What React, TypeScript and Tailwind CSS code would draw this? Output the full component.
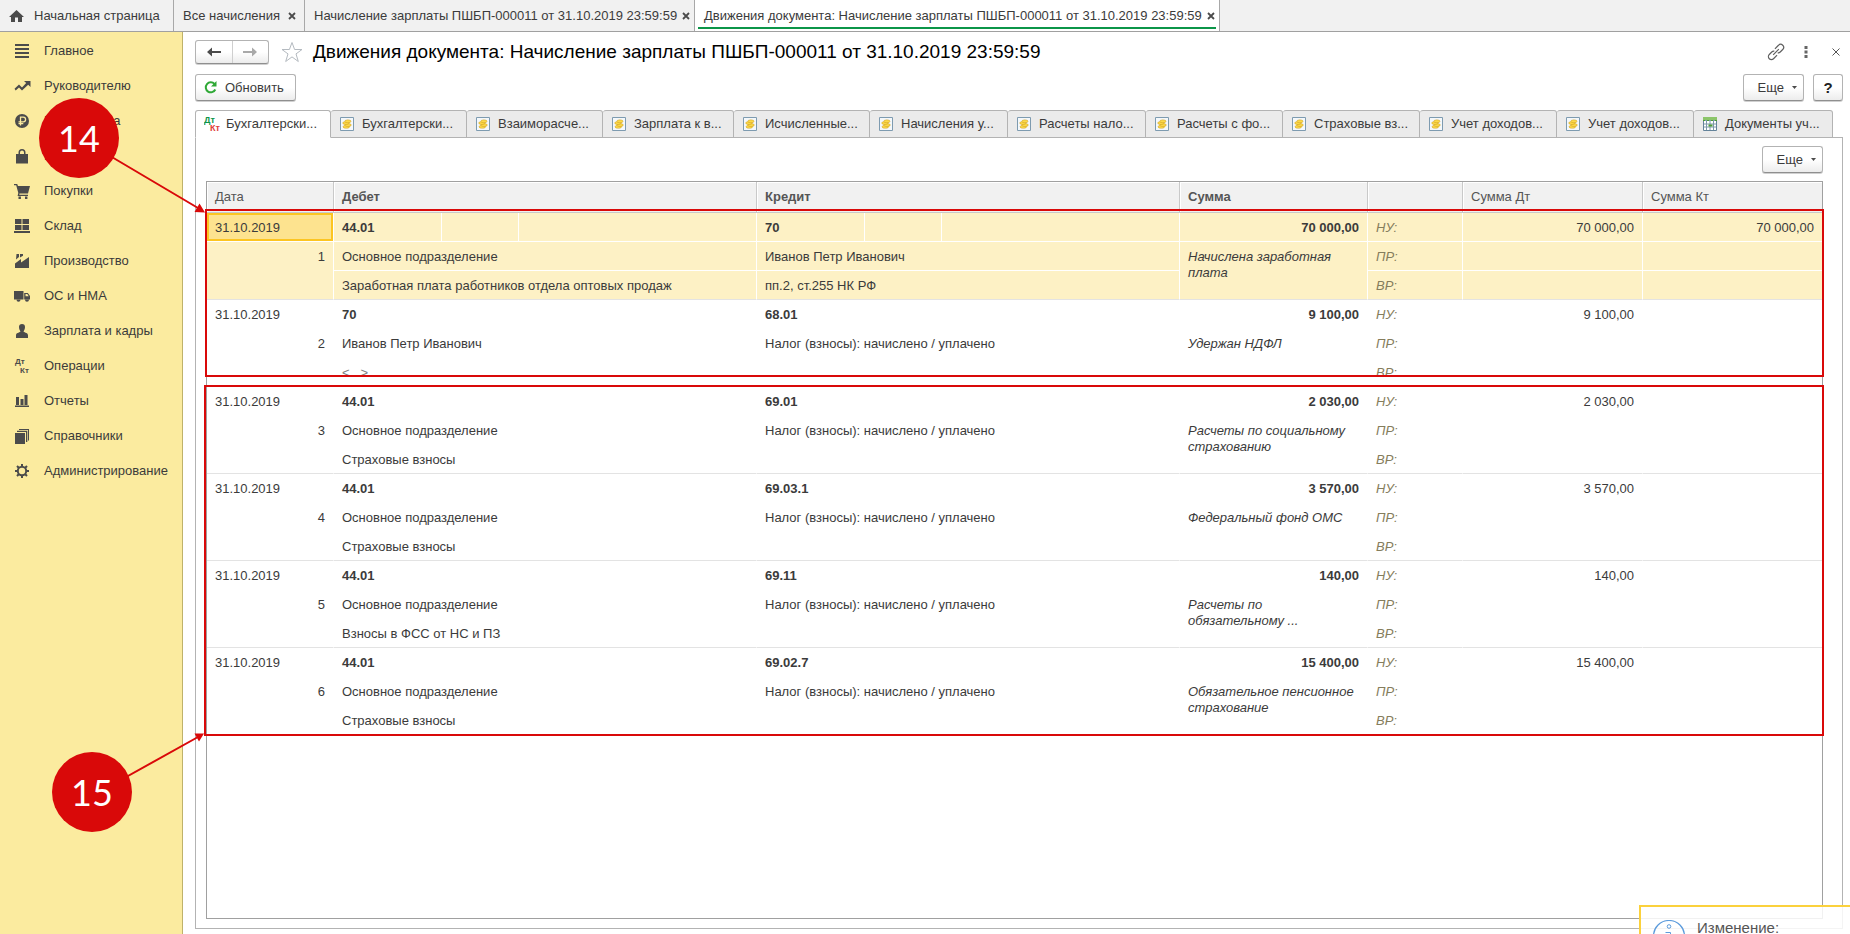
import React from "react";

const menu = [
  "Главное", "Руководителю", "Банк и касса", "Продажи", "Покупки", "Склад", "Производство",
  "ОС и НМА", "Зарплата и кадры", "Операции", "Отчеты", "Справочники", "Администрирование",
];

const menuIcons: React.ReactNode[] = [
  <path d="M0 0h14v2H0zM0 4h14v2H0zM0 8h14v2H0zM0 12h14v2H0z" />,
  <path d="M-.5 9.800l4.500-4.300 3 3L11.200 4 9 2h6.500v6l-2.300-2.200L7 11.500l-3-3-3.300 3z" />,
  <g>
    <circle cx="7" cy="7" r="7" />
    <path d="M5.500 11.500V3.200h2.800a2.300 2.300 0 0 1 0 4.600H3.500M3.500 9.600h4.800" fill="none" stroke="#fbeb9f" strokeWidth="1.300" />
  </g>,
  <path d="M1 5h2.500V3.500a3.500 3.500 0 0 1 7 0V5H13v9.500H1zM5 5h4V3.500a2 2 0 0 0-4 0z" fillRule="evenodd" />,
  <path d="M-1 0h3.200l.8 2h12l-2 7.500H4.500l-.3 1.200H13v1.200H2.600L3.300 9 1.200 1.300H-1zM3.500 12.500h2.400V15H3.500zM10 12.500h2.400V15H10z" />,
  <path d="M0 0h6.500v5H0zM7.500 0H14v5H7.500zM0 6h6.500v5H0zM7.500 6H14v5H7.500zM-1 12h16v2H-1z" />,
  <path d="M0 14V9.500L6 5v3.500L14 3v11zM1.500 0h2.500v3L1 5.500zM5 0h3v1.800L5 3.500z" />,
  <path d="M-1 2h9.500v8.500H-1zM9.200 4h3.600L15 7v3.500H9.200zM10.500 5v2.200h3.200L12.300 5zM1.500 10.700a2 2 0 0 0 4 0zM10 10.700a2 2 0 0 0 4 0z" fillRule="evenodd" />,
  <path d="M7 0a3 3 0 0 1 3 3c0 2-1 4-1.500 4.500C10 9 13 8.500 13 11.500V14H1v-2.500C1 8.500 4 9 5.500 7.500 5 7 4 5 4 3a3 3 0 0 1 3-3z" />,
  <g fontFamily="Liberation Sans, sans-serif" fontWeight="700" fontSize="8">
    <text x="0" y="5">Дт</text>
    <text x="5" y="14">Кт</text>
  </g>,
  <path d="M1 3h3v8H1zM5.500 5h3v6h-3zM9.500 1h3v10h-3zM0 11.500h14V13H0z" />,
  <path d="M0 4h10v11H0zM2 1.800h10.300V13H11V3H2zM4 0h10v11.500h-1V1H4z" />,
  <g fill="none" stroke="#4b4b4b">
    <circle cx="7" cy="7" r="4.200" strokeWidth="2" />
    <path d="M7 0v3M7 11v3M0 7h3M11 7h3M2 2l2 2M10 10l2 2M12 2l-2 2M4 10l-2 2" strokeWidth="2" />
  </g>,
];

const docTabs = [
  ["Бухгалтерски...", "w-[136px]"], ["Бухгалтерски...", "w-[136px]"], ["Взаиморасче...", "w-[136px]"],
  ["Зарплата к в...", "w-[131px]"], ["Исчисленные...", "w-[136px]"], ["Начисления у...", "w-[138px]"],
  ["Расчеты нало...", "w-[138px]"], ["Расчеты с фо...", "w-[137px]"], ["Страховые вз...", "w-[137px]"],
  ["Учет доходов...", "w-[137px]"], ["Учет доходов...", "w-[137px]"], ["Документы уч...", "w-[139px]"],
];

type Entry = { dt: string; kt: string; dt2: string; kt2: string; dt3: string; kt3: string; sum: string; note: string; nuKt: string };

const tax = "Налог (взносы): начислено / уплачено";
const dep = "Основное подразделение";
const entries: Entry[] = [
  { dt: "44.01", kt: "70", dt2: dep, kt2: "Иванов Петр Иванович", dt3: "Заработная плата работников отдела оптовых продаж", kt3: "пп.2, ст.255 НК РФ", sum: "70 000,00", note: "Начислена заработная плата", nuKt: "70 000,00" },
  { dt: "70", kt: "68.01", dt2: "Иванов Петр Иванович", kt2: tax, dt3: "<...>", kt3: "", sum: "9 100,00", note: "Удержан НДФЛ", nuKt: "" },
  { dt: "44.01", kt: "69.01", dt2: dep, kt2: tax, dt3: "Страховые взносы", kt3: "", sum: "2 030,00", note: "Расчеты по социальному страхованию", nuKt: "" },
  { dt: "44.01", kt: "69.03.1", dt2: dep, kt2: tax, dt3: "Страховые взносы", kt3: "", sum: "3 570,00", note: "Федеральный фонд ОМС", nuKt: "" },
  { dt: "44.01", kt: "69.11", dt2: dep, kt2: tax, dt3: "Взносы в ФСС от НС и ПЗ", kt3: "", sum: "140,00", note: "Расчеты по обязательному ...", nuKt: "" },
  { dt: "44.01", kt: "69.02.7", dt2: dep, kt2: tax, dt3: "Страховые взносы", kt3: "", sum: "15 400,00", note: "Обязательное пенсионное страхование", nuKt: "" },
];

const buttonLook = "rounded-[3px] border border-[#b3b3b3] border-b-[#8f8f8f] bg-gradient-to-b from-white from-50% to-[#ececec] shadow-[0_1px_0_#d0d0d0]";

function Close() {
  return (
    <svg className="size-2" viewBox="0 0 8 8" aria-hidden="true">
      <path d="M1 1l6 6M7 1L1 7" stroke="#4b4b4b" strokeWidth="1.800" />
    </svg>
  );
}

function WindowTab({ title, width, active }: { title: string; width: string; active?: boolean }) {
  return (
    <div className={`${width} ${active ? "bg-white" : ""} flex shrink-0 items-stretch border-r border-[#a8a8a8] px-[3px]`}>
      <div className={active ? "mb-[2px] flex flex-1 items-center gap-1 border-b-2 border-[#0b9548] pl-[6px] pt-1" : "flex flex-1 items-center gap-1 pl-[6px]"}>
        <a href="#" className="whitespace-nowrap">{title}</a>
        <button aria-label="Закрыть" className="mx-auto"><Close /></button>
      </div>
    </div>
  );
}

function CoinIcon() {
  return (
    <svg className="size-[14px] shrink-0" viewBox="0 0 14 14" aria-hidden="true">
      <path d="M.5 .5h13v13H.5z" fill="#f4f8fb" stroke="#7e9bb0" />
      <g fill="#fbd94a" stroke="#c08a10" strokeWidth=".4">
        <ellipse cx="6.300" cy="9.800" rx="3.300" ry="1.500" />
        <ellipse cx="8" cy="8" rx="3.300" ry="1.500" />
        <ellipse cx="6" cy="6" rx="3.300" ry="1.500" />
        <ellipse cx="7.900" cy="4.300" rx="3.100" ry="1.500" />
      </g>
    </svg>
  );
}

function SheetIcon() {
  return (
    <svg className="size-[14px] shrink-0" viewBox="0 0 14 14" aria-hidden="true">
      <path d="M.5 .5h13v13H.5z" fill="#fff" stroke="#64839a" />
      <path d="M0 0h14v3.500H0z" fill="#8cc56a" />
      <path d="M0 3.500h14M1 7h12M1 10h12M3.500 4v9M7 4v9M10.500 4v9" stroke="#7d98aa" fill="none" />
      <path d="M0 3h2v1H0zM4 3h2v1H4zM8 3h2v1H8zM12 3h2v1h-2zM5.500 7.500h4v2h-4z" fill="#4e9d35" />
    </svg>
  );
}

function DtKtIcon() {
  return (
    <svg className="h-4 w-[17px] shrink-0" viewBox="0 0 17 16" aria-hidden="true" fontFamily="Liberation Sans, sans-serif" fontWeight="700" fontSize="9">
      <text x="0" y="7" fill="#0b9548">Дт</text>
      <text x="6" y="15" fill="#e0403a">Кт</text>
    </svg>
  );
}

function MoreButton() {
  return (
    <button className={`${buttonLook} flex h-[27px] w-[61px] items-center justify-end gap-2 pr-[6px]`}>
      Еще
      <svg className="h-[3px] w-[5px]" viewBox="0 0 5 3" aria-hidden="true"><path d="M0 0h5L2.500 3z" fill="#4b4b4b" /></svg>
    </button>
  );
}

function Account({ code, line }: { code: string; line: string }) {
  return (
    <div className="flex h-7">
      <span className={`flex w-[100px] items-center border-r pt-[2px] ${line}`}>{code}</span>
      <span className={`w-[77px] border-r ${line}`} />
    </div>
  );
}

function EntryRows({ e, index }: { e: Entry; index: number }) {
  const on = index === 0;
  const line = on ? "border-white" : "border-transparent";
  const last = "border-b border-b-[#e3e3e3]";
  const box = `h-[29px] border-b border-r px-2 align-middle last:border-r-0 ${line}`;
  const cell = `${box} pt-[2px]`;
  const low = `h-[29px] border-r px-2 pt-[2px] align-middle last:border-r-0 ${line} ${last}`;
  const label = "italic text-[#857d5c]";
  return (
    <tbody className={on ? "bg-[#fdf1c5]" : "bg-white"}>
      <tr>
        <td className={`${cell} ${on ? "bg-[#fde38f] shadow-[inset_0_0_0_2px_#fcc522]" : ""}`}>31.10.2019</td>
        <td className={`${box} font-bold`}><Account code={e.dt} line={line} /></td>
        <td className={`${box} font-bold`}><Account code={e.kt} line={line} /></td>
        <td className={`${cell} text-right font-bold`}>{e.sum}</td>
        <td className={`${cell} ${label}`}>НУ:</td>
        <td className={`${cell} text-right`}>{e.sum}</td>
        <td className={`${cell} text-right`}>{e.nuKt}</td>
      </tr>
      <tr>
        <td rowSpan={2} className={`border-r px-2 pt-[7px] text-right align-top ${line} ${last}`}>{index + 1}</td>
        <td className={cell}>{e.dt2}</td>
        <td className={cell}>{e.kt2}</td>
        <td rowSpan={2} className={`border-r px-2 pt-[7px] align-top italic ${line} ${last}`}>{e.note}</td>
        <td className={`${cell} ${label}`}>ПР:</td>
        <td className={cell} />
        <td className={cell} />
      </tr>
      <tr>
        <td className={`${low} ${e.dt3 === "<...>" ? "text-[#808080]" : ""}`}>{e.dt3}</td>
        <td className={low}>{e.kt3}</td>
        <td className={`${low} ${label}`}>ВР:</td>
        <td className={low} />
        <td className={low} />
      </tr>
    </tbody>
  );
}

export default function App() {
  const head = "h-[31px] border-b border-r border-[#c9c9c9] px-2 text-left font-normal shadow-[inset_1px_1px_0_#fff] last:border-r-0";
  return (
    <div className="relative flex h-screen flex-col overflow-hidden bg-white font-['Liberation_Sans',Arial,sans-serif] text-[13px] leading-4 text-[#3b3b3b]">
      <nav className="flex h-8 shrink-0 items-stretch border-b border-[#a0a0a0] bg-[#f1f1f1]">
        <a href="#" className="flex w-[174px] items-center gap-[10px] border-r border-[#a8a8a8] pl-[9px]">
          <svg className="h-[14px] w-[15px]" viewBox="0 0 15 14" aria-hidden="true">
            <path d="M7.500 1l7.500 7h-2v5H9V8.500H6V13H2V8H0z" fill="#4b4b4b" />
          </svg>
          Начальная страница
        </a>
        <WindowTab width="w-[131px]" title="Все начисления" />
        <WindowTab width="w-[390px]" title="Начисление зарплаты ПШБП-000011 от 31.10.2019 23:59:59" />
        <WindowTab width="w-[525px]" title="Движения документа: Начисление зарплаты ПШБП-000011 от 31.10.2019 23:59:59" active />
      </nav>

      <div className="flex min-h-0 flex-1">
        <aside className="w-[183px] shrink-0 border-r border-[#bfb26a] bg-[#fbeb9f] pt-px">
          {menu.map((m, i) => (
            <a href="#" key={m} className="flex h-[35px] items-center gap-[15px] pl-[15px]">
              <svg className="size-[14px] shrink-0 overflow-visible" viewBox="0 0 14 14" fill="#4b4b4b" aria-hidden="true">{menuIcons[i]}</svg>
              {m}
            </a>
          ))}
        </aside>

        <main className="flex min-w-0 flex-1 flex-col pb-[5px] pl-3 pr-[7px] pt-2">
          <header className="flex h-6 items-center">
            <div className={`${buttonLook} flex h-6 w-[74px]`}>
              <button aria-label="Назад" className="flex flex-1 items-center justify-center border-r border-[#cfcfcf]">
                <svg className="h-[10px] w-[14px]" viewBox="0 0 14 10" aria-hidden="true"><path d="M0 5l5-4.500V4h9v2H5v3.500z" fill="#4b4b4b" /></svg>
              </button>
              <button aria-label="Вперед" className="flex flex-1 items-center justify-center">
                <svg className="h-[10px] w-[14px]" viewBox="0 0 14 10" aria-hidden="true"><path d="M14 5L9 .5V4H0v2h9v3.500z" fill="#a9a9a9" /></svg>
              </button>
            </div>
            <button aria-label="Избранное" className="ml-[11px]">
              <svg className="h-[22px] w-6" viewBox="0 0 24 22" aria-hidden="true">
                <path d="M12 1.500l2.600 7H22l-6 4.400 2.300 7.600-6.300-4.600-6.300 4.600L8 12.900 2 8.500h7.400z" fill="#fff" stroke="#b4bac0" />
              </svg>
            </button>
            <h1 className="ml-[9px] flex-1 text-[19px] leading-6 text-black">Движения документа: Начисление зарплаты ПШБП-000011 от 31.10.2019 23:59:59</h1>
            <button aria-label="Ссылка">
              <svg className="size-4 overflow-visible" viewBox="0 0 16 16" fill="none" stroke="#5f5f5f" strokeWidth="1.200" aria-hidden="true">
                <g transform="rotate(-45 8 8)">
                  <path d="M6.500 11H1.500a3 3 0 0 1 0-6H5a3 3 0 0 1 2.400 1.200M9.500 5h5a3 3 0 0 1 0 6H11a3 3 0 0 1-2.400-1.200M4 8h8" />
                </g>
              </svg>
            </button>
            <button aria-label="Меню" className="ml-[20px]">
              <svg className="h-3 w-[4px]" viewBox="0 0 4 12" aria-hidden="true"><path d="M.5 0h3v3h-3zM.5 4.500h3v3h-3zM.5 9h3v3h-3z" fill="#666" /></svg>
            </button>
            <button aria-label="Закрыть форму" className="ml-6 mr-[3px]">
              <svg className="size-2" viewBox="0 0 8 8" aria-hidden="true"><path d="M.5 .5l7 7M7.500 .5l-7 7" stroke="#555" /></svg>
            </button>
          </header>

          <div className="mt-[10px] flex items-center">
            <button className={`${buttonLook} flex h-[27px] w-[101px] items-center gap-2 pl-2`}>
              <svg className="size-[13px]" viewBox="0 0 13 13" aria-hidden="true">
                <path d="M10.500 3A5 5 0 1 0 11.300 8.500" fill="none" stroke="#2fa836" strokeWidth="2" />
                <path d="M12.500 0v5.500H7z" fill="#2fa836" />
              </svg>
              Обновить
            </button>
            <div className="flex-1" />
            <MoreButton />
            <button className={`${buttonLook} ml-[9px] h-[27px] w-[30px] text-[15px] font-bold text-[#222]`}>?</button>
          </div>

          <div className="mt-[9px] flex h-7" role="tablist">
            {docTabs.map(([t, w], i) => (
              <button
                key={i}
                role="tab"
                aria-selected={i === 0}
                className={`${w} ${i === 0 ? "gap-[5px] border-l border-b-transparent bg-white pl-2" : "gap-2 border-b-[#b3b3b3] bg-[#ebebeb] pl-[9px]"} flex min-w-0 items-center rounded-t-[3px] border-b border-r border-t border-[#b3b3b3]`}
              >
                {i === 0 ? <DtKtIcon /> : i === 11 ? <SheetIcon /> : <CoinIcon />}
                <span className="whitespace-nowrap">{t}</span>
              </button>
            ))}
            <span className="flex-1 border-b border-[#b3b3b3]" />
          </div>

          <section className="flex min-h-0 flex-1 flex-col border-x border-b border-[#b3b3b3] px-[10px] pb-[9px] pt-2">
            <div className="mr-[9px] flex justify-end"><MoreButton /></div>
            <div className="relative mr-[9px] mt-2 min-h-0 flex-1 border border-[#a0a0a0]">
              <table className="w-full table-fixed border-separate border-spacing-0">
                <colgroup>
                  <col className="w-[127px]" />
                  <col />
                  <col />
                  <col className="w-[188px]" />
                  <col className="w-[95px]" />
                  <col className="w-[180px]" />
                  <col className="w-[179px]" />
                </colgroup>
                <thead className="bg-[#f1f1f1] text-[#555]">
                  <tr>
                    <th className={head}>Дата</th>
                    <th className={head}><b>Дебет</b></th>
                    <th className={head}><b>Кредит</b></th>
                    <th className={head}><b>Сумма</b></th>
                    <th className={head} aria-label="Вид учета" />
                    <th className={head}>Сумма Дт</th>
                    <th className={head}>Сумма Кт</th>
                  </tr>
                </thead>
                {entries.map((e, i) => <EntryRows key={i} e={e} index={i} />)}
              </table>
              <div className="absolute -left-[2px] -right-[2px] top-[27px] h-[168px] border-2 border-[#d90909]" />
              <div className="absolute inset-x-0 top-[195px] h-2 bg-white" />
              <div className="absolute -left-[3px] -right-[2px] top-[203px] h-[351px] border-2 border-[#d90909]" />
            </div>
          </section>
        </main>
      </div>

      <svg className="pointer-events-none absolute left-0 top-0 h-[934px] w-[210px]" viewBox="0 0 210 934" aria-hidden="true">
        <g stroke="#d90909" strokeWidth="2" fill="#d90909">
          <path d="M100 150L198 208M110 786L198 737" />
          <path d="M205 212.500l-10.500-.5 5-8.500zM204 733.500l-5 8-4.500-8z" strokeWidth="0" />
        </g>
      </svg>
      <div className="absolute left-[39px] top-[98px] flex size-20 items-center justify-center rounded-full bg-[#d90909] font-['Lato',sans-serif] text-[36px] leading-10 text-white">14</div>
      <div className="absolute left-[52px] top-[752px] flex size-20 items-center justify-center rounded-full bg-[#d90909] font-['Lato',sans-serif] text-[36px] leading-10 text-white">15</div>

      <div className="absolute -bottom-8 -right-1 flex h-[61px] w-[215px] gap-3 border-2 border-[#fbd13c] bg-white/85 pl-3 pt-[13px] text-[15px] text-[#555]" role="status">
        <svg className="size-8 shrink-0" viewBox="0 0 32 32" fill="none" stroke="#5c9bdc" aria-hidden="true">
          <circle cx="16" cy="16" r="15.500" strokeWidth="1.200" />
          <circle cx="16" cy="6.500" r="1.800" />
          <path d="M12.500 12.500h5v12h3" />
        </svg>
        Изменение:
      </div>
    </div>
  );
}
